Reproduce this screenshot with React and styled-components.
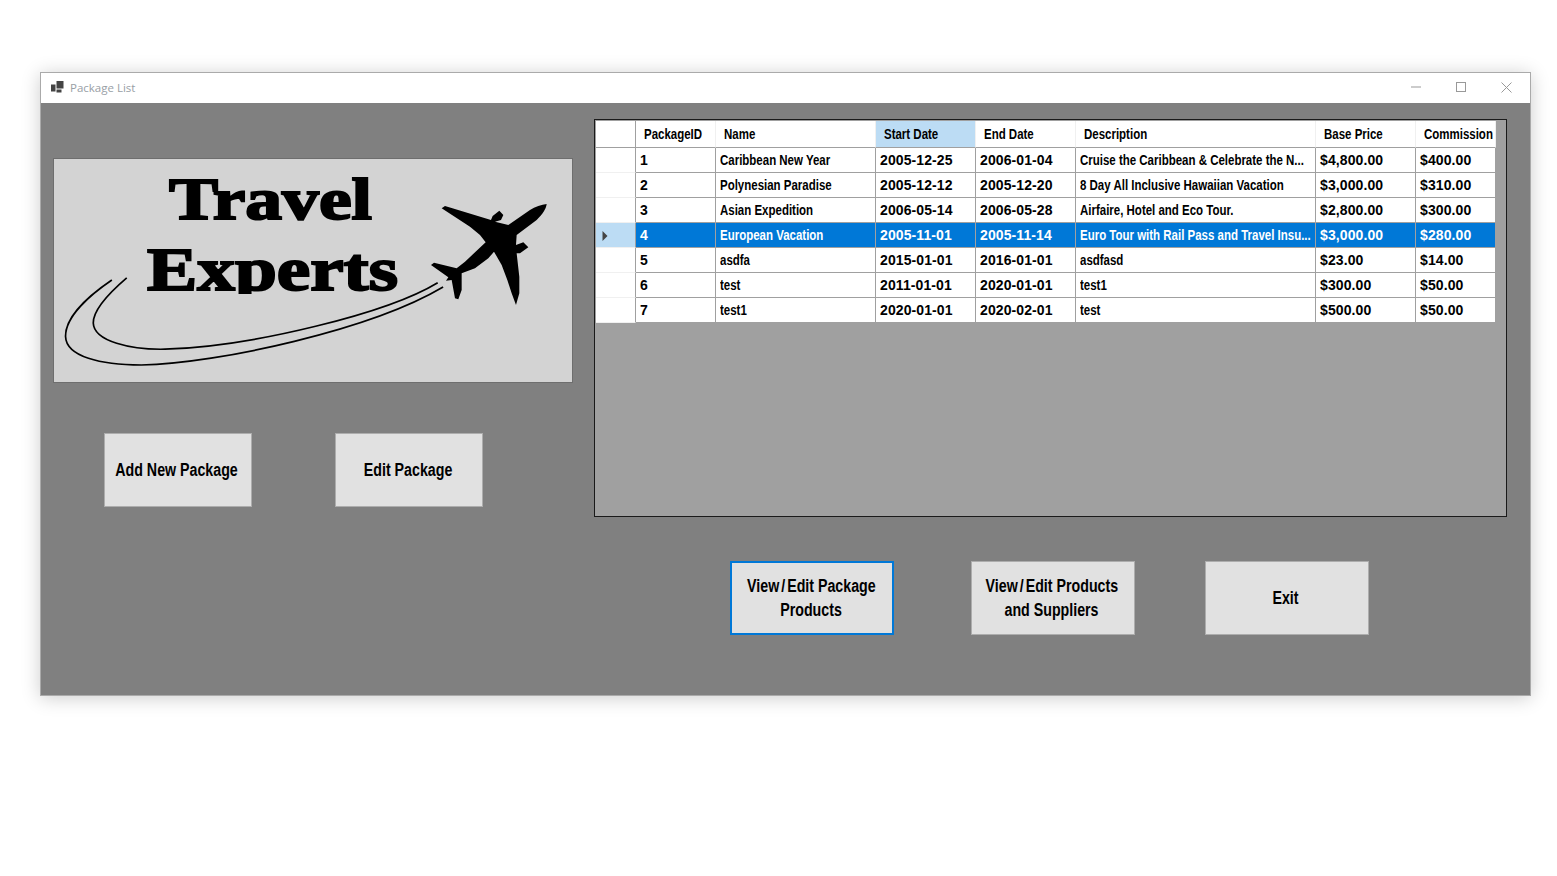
import React from 'react';
import styled, { createGlobalStyle } from 'styled-components';

const columns = [
  { key: 'id', title: 'PackageID', width: 80 },
  { key: 'name', title: 'Name', width: 160 },
  { key: 'start', title: 'Start Date', width: 100, active: true },
  { key: 'end', title: 'End Date', width: 100 },
  { key: 'desc', title: 'Description', width: 240 },
  { key: 'base', title: 'Base Price', width: 100 },
  { key: 'comm', title: 'Commission', width: 80 },
];

const packages = [
  { id: '1', name: 'Caribbean New Year', start: '2005-12-25', end: '2006-01-04', desc: 'Cruise the Caribbean & Celebrate the N...', base: '$4,800.00', comm: '$400.00' },
  { id: '2', name: 'Polynesian Paradise', start: '2005-12-12', end: '2005-12-20', desc: '8 Day All Inclusive Hawaiian Vacation', base: '$3,000.00', comm: '$310.00' },
  { id: '3', name: 'Asian Expedition', start: '2006-05-14', end: '2006-05-28', desc: 'Airfaire, Hotel and Eco Tour.', base: '$2,800.00', comm: '$300.00' },
  { id: '4', name: 'European Vacation', start: '2005-11-01', end: '2005-11-14', desc: 'Euro Tour with Rail Pass and Travel Insu...', base: '$3,000.00', comm: '$280.00', selected: true },
  { id: '5', name: 'asdfa', start: '2015-01-01', end: '2016-01-01', desc: 'asdfasd', base: '$23.00', comm: '$14.00' },
  { id: '6', name: 'test', start: '2011-01-01', end: '2020-01-01', desc: 'test1', base: '$300.00', comm: '$50.00' },
  { id: '7', name: 'test1', start: '2020-01-01', end: '2020-02-01', desc: 'test', base: '$500.00', comm: '$50.00' },
];

// numeric columns keep the full width of the font, text columns are squeezed
const numeric = ['id', 'start', 'end', 'base', 'comm'];

const Global = createGlobalStyle`
  html, body {
    margin: 0;
    background: #fff;
  }
`;

const Page = styled.div`
  height: 876px;
  padding: 72px 0 0 40px;
  box-sizing: border-box;
  font-family: "Liberation Sans", Arial, sans-serif;
`;

const Window = styled.div`
  width: 1491px;
  height: 624px;
  box-sizing: border-box;
  border: 1px solid #aaa;
  box-shadow: 0 2px 18px rgba(0, 0, 0, 0.2);
  display: flex;
  flex-direction: column;
`;

const TitleBar = styled.div`
  height: 30px;
  box-sizing: border-box;
  flex: none;
  background: #fff;
  display: flex;
  align-items: center;
  padding: 0 0 2px 10px;
`;

const Title = styled.span`
  margin-left: 6px;
  flex: 1;
  font-family: "Open Sans", sans-serif;
  font-size: 11.5px;
  color: #99a0a6;
`;

const WindowControl = styled.div`
  width: 45px;
  height: 28px;
  display: flex;
  align-items: center;
  justify-content: center;
  position: relative;
  left: -2px;

  &:last-child {
    left: -1px;
  }
`;

const Content = styled.div`
  flex: 1;
  background: #808080;
`;

const TopRow = styled.div`
  display: flex;
  align-items: flex-start;
  padding: 16px 0 0 12px;
  gap: 21px;
`;

const LeftColumn = styled.div`
  width: 520px;
  padding-top: 39px;
`;

const Logo = styled.svg`
  display: block;
  width: 520px;
  height: 225px;
  background: #d3d3d3;
  outline: 1px solid #6e6e6e;
  outline-offset: -1px;
`;

const PackageActions = styled.div`
  display: flex;
  gap: 83px;
  padding: 50px 0 0 51px;
`;

const Button = styled.button`
  width: ${({ $width }) => $width}px;
  height: 74px;
  padding: 0;
  box-sizing: border-box;
  background: #e1e1e1;
  border: ${({ $focused }) => ($focused ? '2px solid #0078d7' : '1px solid #adadad')};
  font: inherit;
  color: #000;
  display: flex;
  flex-direction: column;
  align-items: center;
  justify-content: center;
`;

const ButtonLine = styled.span`
  display: block;
  white-space: nowrap;
  font-size: 18px;
  line-height: 24px;
  font-weight: bold;
  transform: translateX(-1px) scaleX(0.79);
`;

const Slash = styled.span`
  margin: 0 2.5px;
`;

const GridPanel = styled.div`
  width: 913px;
  height: 398px;
  box-sizing: border-box;
  background: #a0a0a0;
  border: 1px solid #1a1a1a;
  padding: 1px 0 0 1px;
`;

const Table = styled.table`
  width: 900px;
  table-layout: fixed;
  border-collapse: separate;
  border-spacing: 0;
`;

const HeadCell = styled.th`
  height: 24px;
  box-sizing: content-box;
  padding: 0 0 2px 8px;
  text-align: left;
  overflow: hidden;
  background: ${({ $active }) => ($active ? '#bcdcf4' : '#fff')};
  border-right: 1px solid #f0f0f0;
  border-bottom: 1px solid #a0a0a0;
`;

const CornerCell = styled(HeadCell)`
  padding: 0;
  height: 26px;
  border-right-color: #a0a0a0;
`;

const RowHeader = styled.td`
  height: 24px;
  padding: 0 0 0 6px;
  box-sizing: content-box;
  background: ${({ $selected }) => ($selected ? '#bcdcf4' : '#fff')};
  border-right: 1px solid #a0a0a0;
  border-bottom: 1px solid #f0f0f0;
`;

const Cell = styled.td`
  height: 22px;
  padding: 0 0 2px 4px;
  box-sizing: content-box;
  overflow: hidden;
  background: ${({ $selected }) => ($selected ? '#0078d7' : '#fff')};
  color: ${({ $selected }) => ($selected ? '#fff' : '#000')};
  border-right: 1px solid #a0a0a0;
  border-bottom: 1px solid #a0a0a0;
`;

const CellText = styled.span`
  display: inline-block;
  white-space: nowrap;
  font-size: 14px;
  font-weight: bold;
  line-height: 16px;
  vertical-align: middle;
  transform-origin: left center;
  transform: scaleX(${({ $squeeze }) => ($squeeze ? 0.82 : 1)});
  letter-spacing: ${({ $squeeze }) => ($squeeze ? 0 : 0.1)}px;
`;

const BottomActions = styled.div`
  display: grid;
  grid-template-columns: 241px 234px 164px;
  padding: 44px 0 0 689px;
`;

const WindowIcon = () => (
  <svg width="13" height="12" viewBox="0 0 13 12">
    <path d="M0 3.5h4.5v7H0zM5.5 0h7v7.5h-7zM5.5 8.500h5v3h-5z" fill="#444" />
  </svg>
);

const Minimize = () => (
  <svg width="10" height="10" viewBox="0 0 10 10">
    <path d="M0 5h10" stroke="#999" strokeWidth="1" fill="none" />
  </svg>
);

const Maximize = () => (
  <svg width="10" height="10" viewBox="0 0 10 10">
    <rect x="0.5" y="0.5" width="9" height="9" stroke="#999" strokeWidth="1" fill="none" />
  </svg>
);

const Close = () => (
  <svg width="11" height="11" viewBox="0 0 11 11">
    <path d="M0.500 0.500l10 10M10.500 0.500l-10 10" stroke="#999" strokeWidth="1" fill="none" />
  </svg>
);

const RowArrow = () => (
  <svg width="6" height="10" viewBox="0 0 6 10" style={{ display: 'block', marginTop: 2 }}>
    <path d="M0.500 0L5.500 5L0.500 10z" fill="#444" />
  </svg>
);

const TravelLogo = () => (
  <Logo viewBox="53 158 520 225">
    <defs>
      {/* the logo's lettering has a p that stops near the baseline */}
      <clipPath id="experts-clip">
        <rect x="140" y="240" width="265" height="54" />
      </clipPath>
    </defs>
    <g fontFamily="'Liberation Serif', serif" fontWeight="bold" fill="#000" stroke="#000" strokeWidth="2">
      <text x="169" y="219" fontSize="60" textLength="203" lengthAdjust="spacingAndGlyphs">Travel</text>
      <g clipPath="url(#experts-clip)">
        <text x="147" y="290" fontSize="62" textLength="251" lengthAdjust="spacingAndGlyphs">Experts</text>
      </g>
    </g>
    <g transform="translate(50 155) scale(0.338 0.336)" fill="none" stroke="#000" strokeWidth="5">
      <path d="M183 372C120 415 45 480 46 540C48 600 150 625 270 625C500 620 950 520 1163 393" />
      <path d="M227 366C170 415 128 465 128 500C130 555 240 580 340 578C600 570 1000 470 1147 380" />
    </g>
    <path
      transform="translate(420 190) scale(0.3333)"
      fill="#000"
      d="M380 42C378 58 368 72 350 90L290 135L288 165L310 157L325 172L300 190L290 190L298 260L298 310L288 345L275 310L262 270L245 225L222 185L205 205L165 235L125 250L125 300L115 328L105 325L95 270L78 272L85 262L33 225L42 218L110 235L135 215L197 157L180 135L150 110L65 55L75 48L213 90L218 78L238 62L250 75L243 90L225 95L265 105L330 60C345 50 365 44 380 42z"
    />
  </Logo>
);

const ButtonText = ({ children }) => {
  const [before, after] = children.split('/');
  if (after === undefined) return children;
  return (
    <>
      {before}
      <Slash>/</Slash>
      {after}
    </>
  );
};

const ActionButton = ({ lines, width, focused }) => (
  <Button type="button" $width={width} $focused={focused}>
    {lines.map(line => (
      <ButtonLine key={line}>
        <ButtonText>{line}</ButtonText>
      </ButtonLine>
    ))}
  </Button>
);

const PackageGrid = () => (
  <GridPanel>
    <Table>
      <colgroup>
        <col style={{ width: 40 }} />
        {columns.map(col => (
          <col key={col.key} style={{ width: col.width }} />
        ))}
      </colgroup>
      <thead>
        <tr>
          <CornerCell />
          {columns.map(col => (
            <HeadCell key={col.key} $active={col.active}>
              <CellText $squeeze>{col.title}</CellText>
            </HeadCell>
          ))}
        </tr>
      </thead>
      <tbody>
        {packages.map(row => (
          <tr key={row.id}>
            <RowHeader $selected={row.selected}>{row.selected && <RowArrow />}</RowHeader>
            {columns.map(col => (
              <Cell key={col.key} $selected={row.selected}>
                <CellText $squeeze={!numeric.includes(col.key)}>{row[col.key]}</CellText>
              </Cell>
            ))}
          </tr>
        ))}
      </tbody>
    </Table>
  </GridPanel>
);

export default function App() {
  return (
    <Page>
      <Global />
      <Window>
        <TitleBar>
          <WindowIcon />
          <Title>Package List</Title>
          <WindowControl><Minimize /></WindowControl>
          <WindowControl><Maximize /></WindowControl>
          <WindowControl><Close /></WindowControl>
        </TitleBar>
        <Content>
          <TopRow>
            <LeftColumn>
              <TravelLogo />
              <PackageActions>
                <ActionButton width={148} lines={['Add New Package']} />
                <ActionButton width={148} lines={['Edit Package']} />
              </PackageActions>
            </LeftColumn>
            <PackageGrid />
          </TopRow>
          <BottomActions>
            <ActionButton width={164} focused lines={['View/Edit Package', 'Products']} />
            <ActionButton width={164} lines={['View/Edit Products', 'and Suppliers']} />
            <ActionButton width={164} lines={['Exit']} />
          </BottomActions>
        </Content>
      </Window>
    </Page>
  );
}
